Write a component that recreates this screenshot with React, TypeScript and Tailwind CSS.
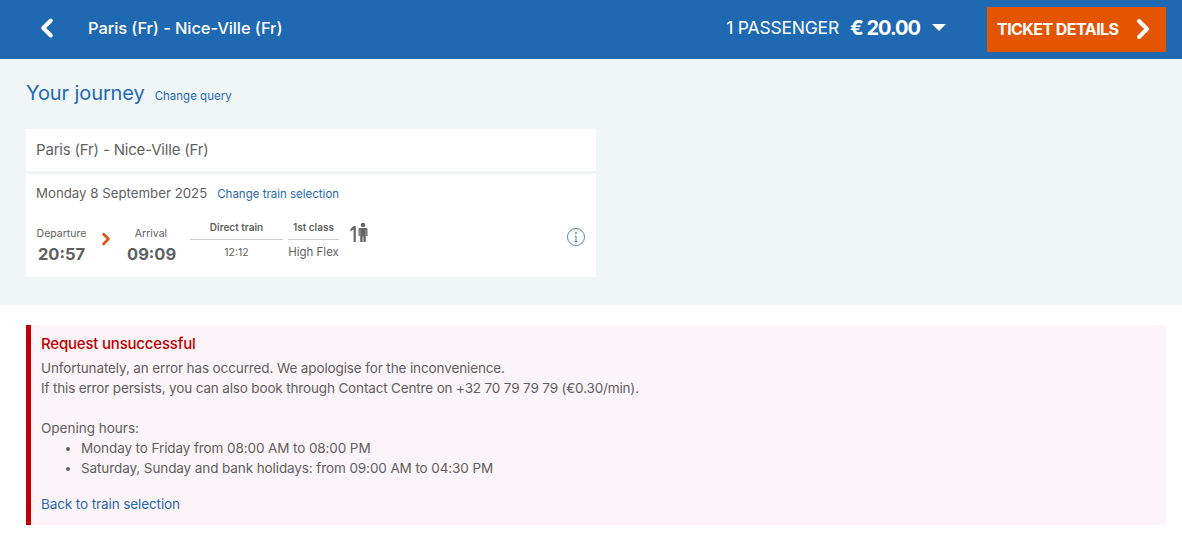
import { ChevronLeft, ChevronRight } from "lucide-react";

export default function App() {
  return (
    <div className="min-h-[538px] bg-white font-['Inter',sans-serif] text-[#5f5f5f]">
      <header className="h-[59px] bg-[#1f69b3] flex items-center text-white">
        <ChevronLeft className="ml-[32px] mb-[3px] w-[30px] h-[30px]" strokeWidth={3.2} />
        <h1 className="ml-[26px] mb-[3px] text-[16.5px] font-medium tracking-[-0.1px]">Paris (Fr) - Nice-Ville (Fr)</h1>
        <div className="ml-auto flex items-center">
          <span className="mb-[3px] text-[17.5px] tracking-[-0.2px]">1 PASSENGER</span>
          <span className="ml-[11px] mb-[3px] text-[20px] font-bold tracking-[-1px]">€ 20.00</span>
          <span className="ml-[12px] mb-[5px] w-0 h-0 border-x-[7px] border-x-transparent border-t-[7px] border-t-white" />
          <button className="ml-[41px] mr-[16px] w-[179px] h-[45px] bg-[#e35500] flex items-center pl-[10px] pb-[2px] text-[16px] font-bold tracking-[-0.55px]">
            TICKET DETAILS
            <ChevronRight className="ml-[8px] w-[32px] h-[32px]" strokeWidth={3} />
          </button>
        </div>
      </header>

      <section className="h-[246px] bg-[#f0f5f6] px-[26px] pt-[20px]">
        <div className="flex items-baseline">
          <h2 className="text-[20px] text-[#1f69b3] leading-[28px] tracking-[-0.1px]">Your journey</h2>
          <a className="ml-[10px] text-[11.5px] text-[#1f69b3]">Change query</a>
        </div>
        <div className="mt-[22px] w-[570px] h-[148px] bg-white">
          <div className="h-[42px] flex items-center px-[10px] text-[15px] tracking-[-0.18px] border-b-[3px] border-[#f0f5f6] box-content">
            Paris (Fr) - Nice-Ville (Fr)
          </div>
          <div className="px-[10px] pt-[10px]">
            <div className="flex items-baseline">
              <span className="text-[13.25px]">Monday 8 September 2025</span>
              <a className="ml-[10px] text-[11.5px] text-[#1f69b3]">Change train selection</a>
            </div>
            <div className="mt-[16px] flex items-start">
              <div className="w-[51px] mt-[6px] text-center">
                <div className="text-[10.5px]">Departure</div>
                <div className="text-[16.5px] font-bold leading-[25px]">20:57</div>
              </div>
              <ChevronRight className="mt-[9px] ml-[9px] w-[20px] h-[20px] text-[#d4570f]" strokeWidth={3} />
              <div className="ml-[11px] w-[48px] mt-[6px] text-center">
                <div className="text-[10.5px]">Arrival</div>
                <div className="text-[16.5px] font-bold leading-[25px]">09:09</div>
              </div>
              <div className="ml-[15px] w-[93px] text-center">
                <div className="text-[10px] font-semibold h-[20px] border-b border-[#c8ccce]">Direct train</div>
                <div className="mt-[5px] text-[10.5px]">12:12</div>
              </div>
              <div className="ml-[5px] w-[51px] text-center">
                <div className="text-[10px] font-semibold h-[20px] border-b border-[#c8ccce]">1st class</div>
                <div className="mt-[4px] text-[11.5px]">High Flex</div>
              </div>
              <svg className="ml-[11px] mt-[2px]" width="20" height="22" viewBox="0 0 20 22" fill="#666666">
                <path d="M0.5 7 L4 4 H5.8 V20 H3.6 V7.5 L0.5 9.5 Z" />
                <circle cx="13" cy="3" r="2.3" />
                <path d="M8.5 7 Q8.5 6 10 6 H16 Q17.5 6 17.5 7 V14 H16.2 V8 H15.8 V20 H13.4 V14.5 H12.6 V20 H10.2 V8 H9.8 V14 H8.5 Z" />
              </svg>
              <svg className="ml-auto mt-[7px]" width="20" height="20" viewBox="0 0 20 20" fill="none" stroke="#3f7aa8">
                <circle cx="10" cy="10" r="8.5" strokeWidth="0.9" />
                <path d="M10 9 V14.5 M8.6 14.5 H11.4 M8.8 9 H10" strokeWidth="0.9" />
                <circle cx="10" cy="6" r="0.5" fill="#3f7aa8" />
              </svg>
            </div>
          </div>
        </div>
      </section>

      <div className="mr-[16px] ml-[26px] mt-[20px] h-[200px] bg-[#fcf4f8] border-l-[5px] border-[#c00000] pl-[10px] pt-[8px] text-[13.5px] leading-[20px]">
        <h3 className="text-[15px] font-medium text-[#c00000] leading-[22px] tracking-[-0.2px]">Request unsuccessful</h3>
        <p className="mt-[3px] tracking-[-0.12px]">Unfortunately, an error has occurred. We apologise for the inconvenience.</p>
        <p className="tracking-[-0.155px]">If this error persists, you can also book through Contact Centre on +32 70 79 79 79 (€0.30/min).</p>
        <p className="mt-[20px]">Opening hours:</p>
        <ul className="list-disc pl-[40px] tracking-[-0.1px]">
          <li>Monday to Friday from 08:00 AM to 08:00 PM</li>
          <li>Saturday, Sunday and bank holidays: from 09:00 AM to 04:30 PM</li>
        </ul>
        <a className="block mt-[16px] text-[#1f69b3] tracking-[-0.1px]">Back to train selection</a>
      </div>
    </div>
  );
}
